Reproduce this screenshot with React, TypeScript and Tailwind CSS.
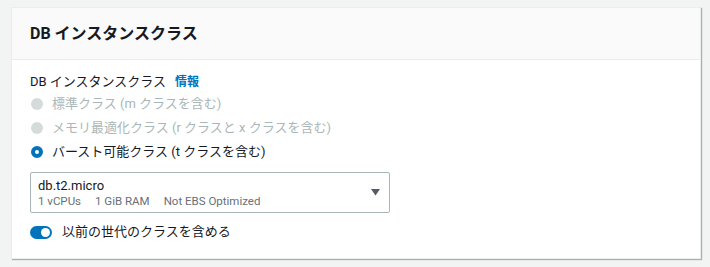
import React from "react";

const font = { fontFamily: 'Roboto, "Noto Sans CJK JP", sans-serif' };

function Radio({ state }: { state: "disabled" | "checked" }) {
  if (state === "disabled") {
    return <span className="block ml-[1px] w-[12px] h-[12px] rounded-full bg-[#d5dbdb]" />;
  }
  return (
    <span className="block ml-[1px] w-[12px] h-[12px] rounded-full border-[4px] border-[#0073bb] bg-white" />
  );
}

export default function App() {
  return (
    <div className="w-[710px] h-[267px] bg-[#f2f3f3] pt-[7px] pl-[11px]" style={font}>
      <div className="w-[690px] h-[252px] bg-white border border-[#eaeded] shadow-[1px_1px_1px_rgba(0,28,36,0.3)] flex flex-col">
        <div className="h-[52px] bg-[#fafafa] border-b border-[#eaeded] flex items-center pl-[18px]">
          <h2 className="text-[16px] font-bold text-[#16191f] leading-none">DB インスタンスクラス</h2>
        </div>
        <div className="pl-[18px] pt-[12px] flex flex-col">
          <div className="flex items-center h-[20px] text-[13px] text-[#16191f]">
            <span>DB インスタンスクラス</span>
            <span className="ml-[9px] text-[12px] font-bold text-[#0073bb]">情報</span>
          </div>
          <div className="flex flex-col">
            <div className="flex items-center h-[24px] gap-[9px] text-[13px] text-[#aab7b8]">
              <Radio state="disabled" />
              <span>標準クラス (m クラスを含む)</span>
            </div>
            <div className="flex items-center h-[24px] gap-[9px] text-[13px] text-[#aab7b8]">
              <Radio state="disabled" />
              <span>メモリ最適化クラス (r クラスと x クラスを含む)</span>
            </div>
            <div className="flex items-center h-[24px] gap-[9px] text-[13px] text-[#16191f]">
              <Radio state="checked" />
              <span>バースト可能クラス (t クラスを含む)</span>
            </div>
          </div>
          <div className="mt-[8px] w-[360px] h-[41px] border border-[#aab7b8] rounded-[2px] flex items-center pl-[7px] pr-[9px]">
            <div className="flex-1 flex flex-col">
              <span className="text-[13px] leading-[17px] text-[#16191f]">db.t2.micro</span>
              <div className="flex gap-[14px] text-[11.5px] leading-[15px] text-[#687078]">
                <span>1 vCPUs</span>
                <span>1 GiB RAM</span>
                <span>Not EBS Optimized</span>
              </div>
            </div>
            <svg width="9" height="7" viewBox="0 0 9 7">
              <path d="M0 0 H9 L4.5 6.5 Z" fill="#545b64" />
            </svg>
          </div>
          <div className="mt-[9px] h-[20px] flex items-center gap-[10px]">
            <span className="relative block w-[22px] h-[13px] rounded-full bg-[#0073bb]">
              <span className="absolute right-[2px] top-[2px] w-[9px] h-[9px] rounded-full bg-white" />
            </span>
            <span className="text-[13px] text-[#16191f]">以前の世代のクラスを含める</span>
          </div>
        </div>
      </div>
    </div>
  );
}
